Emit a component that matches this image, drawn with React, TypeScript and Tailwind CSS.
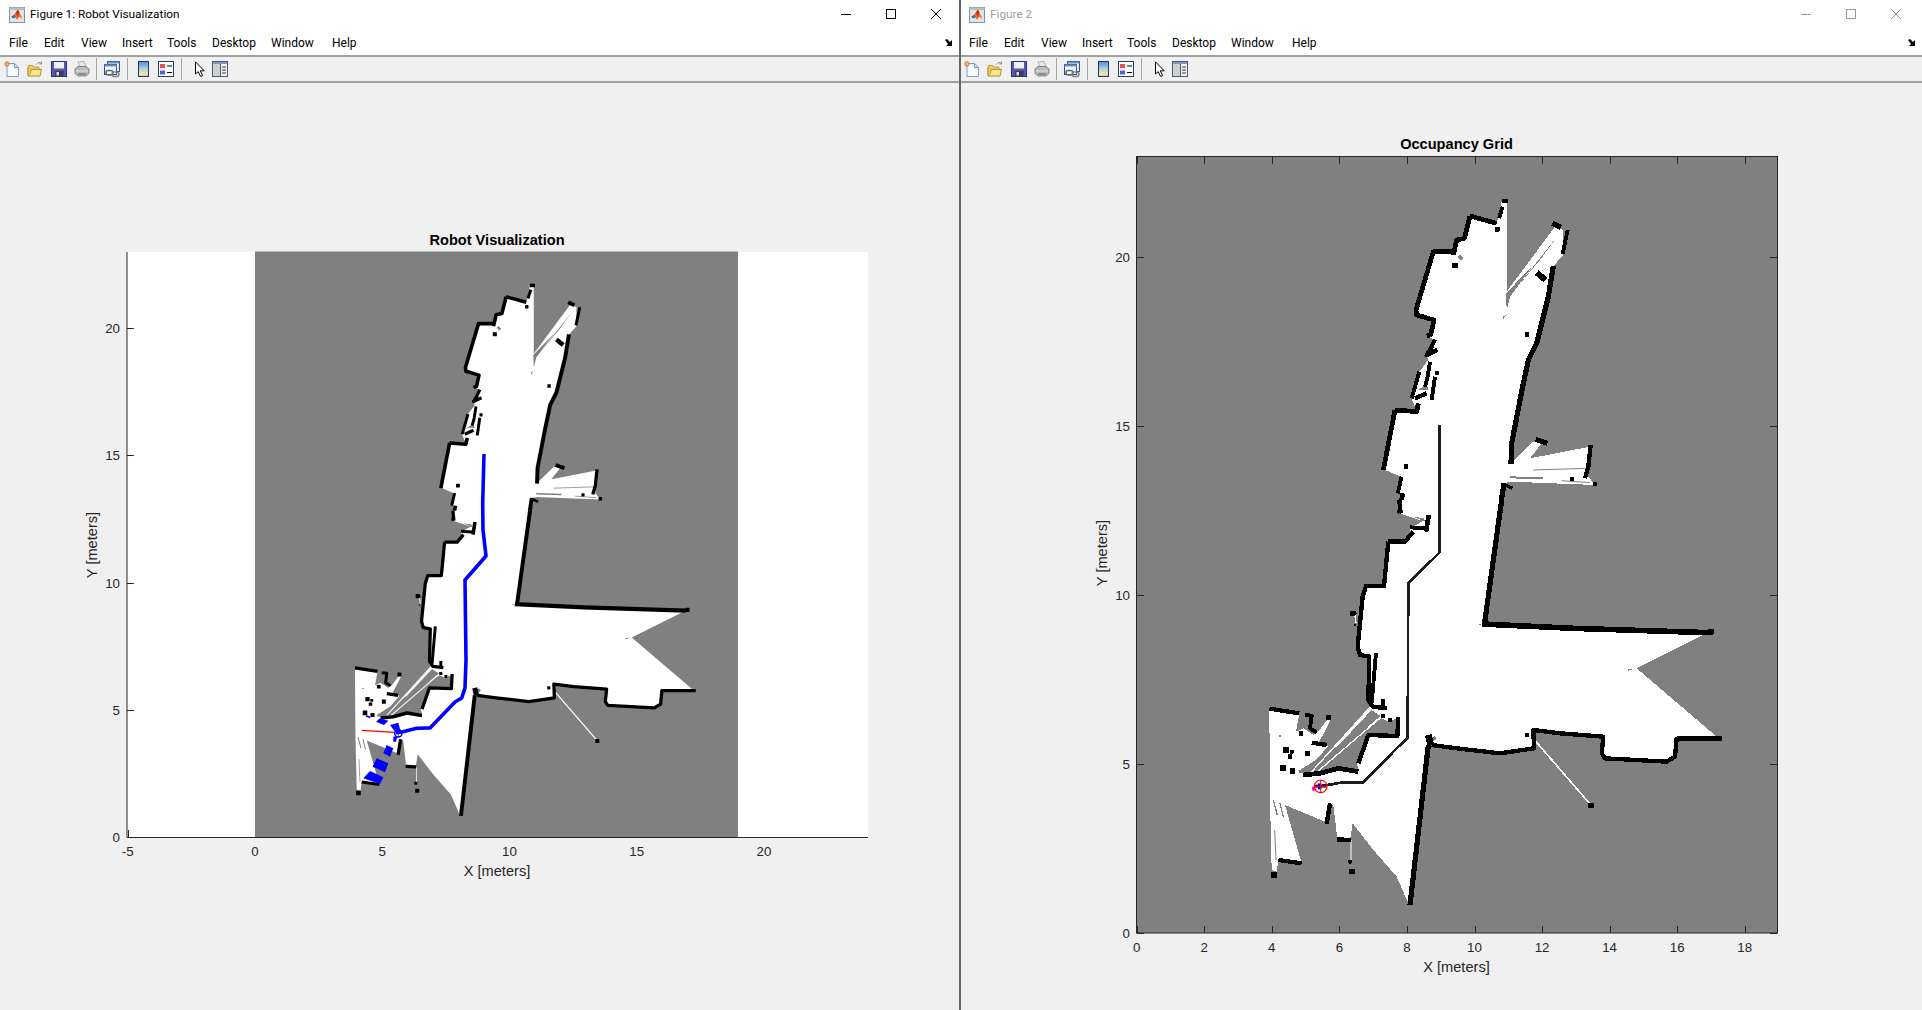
import React from "react";

type P = [string, number];
const G5 = "translate(1280 180) scale(0.33333)";
const G6 = "translate(1240 500) scale(0.33333)";

const OUT5 = "680,62 680,335 825,140 850,150 850,225 805,275 820,258 805,350 770,490 745,540 725,635 695,790 693,850 760,785 785,790 750,835 930,800 925,890 945,915 690,905 670,910 650,1020 420,1020 358,1000 368,940 352,940 362,890 315,870 345,690 410,695 395,655 418,575 445,540 440,525 450,510 462,478 445,470 460,420 410,405 405,390 460,215 520,220 530,180 555,175 570,108 650,130 665,65";
const OUT6 = "478,0 785,0 735,370 1410,395 1190,505 1430,710 1440,716 1310,716 1305,770 1280,785 1095,775 1085,760 1090,710 960,700 880,690 882,745 780,760 650,745 575,735 565,720 510,1215 505,1210 470,1130 400,1050 338,970 330,1020 292,1015 280,915 265,910 255,965 135,915 185,1090 115,1080 110,1115 95,1110 90,895 88,628 178,640 168,695 190,685 220,705 235,695 265,655 272,660 238,725 265,738 200,812 215,813 390,625 385,600 390,470 360,465 352,440 368,290 378,255 432,255 445,125 495,125 515,110 510,85 555,60 490,42 480,40";

const WALLS5: P[] = [
  ["665,63 685,63", 11], ["668,80 657,115", 9], ["570,108 650,130", 11],
  ["570,108 553,175 530,180 520,225", 11], ["520,215 460,215 408,390 410,405 462,420 452,465 440,468", 11],
  ["465,478 450,510 440,525 472,510", 10], ["450,545 443,590 435,620", 9], ["418,575 395,655", 9], ["405,655 440,640", 10],
  ["465,590 455,660", 9], ["345,690 410,695 415,670", 11], ["345,690 310,870", 11], ["365,890 353,940", 9], ["368,940 358,1000", 11],
  ["863,150 848,222", 9], ["817,130 842,142", 12], ["770,278 797,300", 14],
  ["820,258 805,350 770,490 745,540 725,635 695,790 693,852", 12], ["767,778 802,790", 12], ["932,795 925,860 915,895", 10],
  ["670,912 697,925", 8], ["672,910 655,1020", 12],
];
const DOTS5: number[][] = [[652, 148, 12], [525, 257, 14], [470, 578, 11], [378, 860, 13], [741, 463, 12], [876, 897, 11], [945, 912, 12], [444, 1012, 14]];
const GRAY5 = ["678,340 760,255 690,350 680,390", "670,408 678,405 668,422", "700,335 835,165 780,240", "415,630 440,612 445,630"];
const GRAYLINES5: P[] = [["760,870 920,865", 3], ["690,892 790,895", 6], ["845,902 930,908", 3], ["536,228 547,239", 10]];

const WALLS6: P[] = [
  ["478,0 482,40", 10], ["566,45 558,95", 11], ["510,82 555,85", 9], ["445,125 495,125 520,95", 10],
  ["445,125 432,258 378,258 368,290 353,440 360,465 388,470 385,600 398,620 440,625", 10], ["408,460 395,610", 9],
  ["475,650 472,708 385,705 355,790", 10], ["190,825 240,820 295,805 355,815", 11],
  ["88,626 178,640", 10], ["195,645 215,647 210,685 230,697", 9], ["215,728 260,735", 10],
  ["785,0 733,375", 12], ["725,372 1000,385 1405,398", 13],
  ["1445,716 1310,716 1305,770 1280,785 1095,775 1085,760 1090,710 960,700 880,690 882,745 780,760 650,745 575,735", 10],
  ["565,705 572,735", 16], ["565,735 510,1215", 12],
  ["270,910 260,972", 10], ["290,1018 332,1020", 10], ["115,1080 185,1090", 10], ["430,598 430,620", 9], ["340,335 345,345", 10],
];
const DOTS6: number[][] = [[1412, 395, 15], [860, 705, 11], [1053, 917, 14], [265, 652, 14], [183, 700, 13], [138, 750, 15], [155, 755, 10], [150, 770, 12], [203, 760, 14], [128, 805, 16], [158, 813, 14], [330, 1085, 10], [336, 1115, 14], [102, 1124, 16], [430, 648, 11], [450, 660, 10], [345, 375, 5], [338, 340, 14]];
const GRAY6 = ["175,813 425,655 445,665 470,655 470,705 385,705 350,790 355,808 295,800 240,812 180,820", "245,790 395,630 422,648 258,785", "520,50 552,55 555,65"];
const GRAYLINES6: P[] = [["720,372 720,376", 8], ["580,710 585,720", 10], ["1165,510 1175,508", 4], ["104,990 108,1080", 3], ["120,706 120,710", 6], ["120,910 130,950", 4], ["100,900 112,945", 4]];
const WHITELINES6: P[] = [["215,815 390,622", 4], ["232,815 425,650", 4], ["888,725 1050,912", 5], ["333,1020 333,1085", 3], ["345,345 348,370", 4]];

function Lines({ items, color, mult = 1 }: { items: P[]; color: string; mult?: number }) {
  return (
    <>
      {items.map(([p, w], i) => (
        <polyline key={i} points={p} fill="none" stroke={color} strokeWidth={w * mult} strokeLinejoin="round" />
      ))}
    </>
  );
}
function Dots({ items }: { items: number[][] }) {
  return (
    <>
      {items.map(([x, y, s0], i) => {
        const s = s0 * 1.15;
        return <rect key={i} x={x - s / 2} y={y - s / 2} width={s} height={s} rx={2} fill="#000" />;
      })}
    </>
  );
}

function MapShapes({ crisp, path }: { crisp: boolean; path: boolean }) {
  return (
    <g shapeRendering={crisp ? "crispEdges" : "auto"}>
      <rect x={1136.7} y={156} width={641} height={777} fill="#808080" />
      <g transform={G5}>
        <polygon points={OUT5} fill="#fff" />
        {GRAY5.map((p, i) => (
          <polygon key={i} points={p} fill="#808080" />
        ))}
        <Lines items={GRAYLINES5} color="#808080" />
        <Lines items={WALLS5} color="#000" mult={1.3} />
        <Dots items={DOTS5} />
        {path && <polyline points="478,735 478,1020" fill="none" stroke="#1c1c1c" strokeWidth={8} />}
      </g>
      <g transform={G6}>
        <polygon points={OUT6} fill="#fff" />
        {GRAY6.map((p, i) => (
          <polygon key={i} points={p} fill="#808080" />
        ))}
        <Lines items={GRAYLINES6} color="#808080" />
        <Lines items={WHITELINES6} color="#fff" />
        <Lines items={WALLS6} color="#000" mult={1.3} />
        <Dots items={DOTS6} />
        {path && (
          <polyline
            points="598,0 598,158 505,250 503,715 475,740 370,847 310,847 245,858"
            fill="none"
            stroke="#1c1c1c"
            strokeWidth={8}
          />
        )}
      </g>
    </g>
  );
}

const TEXT = "#262626";
const AXIS = "#262626";
const FF = "'Liberation Sans', Arial, sans-serif";

function Figure1() {
  const ys = [5, 10, 15, 20];
  const xs = [-5, 0, 5, 10, 15, 20];
  return (
    <svg viewBox="0 83 959 927" className="block w-[959px] h-[927px]" fontFamily={FF}>
      <rect x={127} y={252} width={741} height={585} fill="#fff" />
      <g transform="translate(255 837) scale(0.7535) translate(-1136.7 -933)">
        <MapShapes crisp={false} path={false} />
      </g>
      <polyline
        points="484,454 482.7,503 483,530 486,556 465,580 466,660 465,688 461.7,698 455,702 430,728 428,728 416.7,728.3 403,731.7 396,732.7"
        fill="none"
        stroke="#0000ff"
        strokeWidth={3.6}
        strokeLinejoin="round"
      />
      <g transform="translate(340 660) scale(0.33333)">
        <g fill="#0000ff">
          <polygon points="150,195 175,188 182,215 165,215" />
          <polygon points="160,230 172,228 168,245 160,245" />
          <polygon points="140,255 160,265 150,290 130,280" />
          <polygon points="110,295 145,310 135,337 98,320" />
          <polygon points="90,333 130,352 120,372 70,355" />
          <polygon points="120,175 145,182 132,195 108,185" />
          <polygon points="78,165 92,170 90,175 78,170" />
        </g>
        <line x1={65} y1={211} x2={165} y2={217} stroke="#ff0000" strokeWidth={4} />
        <circle cx={175} cy={220} r={11} fill="none" stroke="#0000ff" strokeWidth={4} />
        <line x1={175} y1={207} x2={175} y2={233} stroke="#0000ff" strokeWidth={2} />
        <line x1={163} y1={220} x2={187} y2={220} stroke="#0000ff" strokeWidth={2} />
      </g>
      <line x1={127} y1={252} x2={127} y2={837.5} stroke={AXIS} />
      <line x1={127} y1={837.5} x2={868} y2={837.5} stroke={AXIS} />
      {ys.map((v) => {
        const y = Math.round(837 - v * 25.45) + 0.5;
        return <line key={v} x1={127} y1={y} x2={134} y2={y} stroke={AXIS} />;
      })}
      <line x1={128.5} y1={830} x2={128.5} y2={837} stroke={AXIS} />
      {[0, ...ys].map((v) => (
        <text key={v} x={120} y={837 - v * 25.45 + 5} textAnchor="end" fontSize={13.3} fill={TEXT}>
          {v}
        </text>
      ))}
      {xs.map((v) => (
        <text key={v} x={255 + v * 25.45} y={856} textAnchor="middle" fontSize={13.3} fill={TEXT}>
          {v}
        </text>
      ))}
      <text x={497} y={245} textAnchor="middle" fontSize={14.6} fontWeight="bold" fill="#000">
        Robot Visualization
      </text>
      <text x={497} y={876} textAnchor="middle" fontSize={14.6} fill={TEXT}>
        X [meters]
      </text>
      <text transform="translate(97 545) rotate(-90)" textAnchor="middle" fontSize={14.6} fill={TEXT}>
        Y [meters]
      </text>
    </svg>
  );
}

function Figure2() {
  const x0 = 1136.7;
  const y0 = 933;
  const sx = 33.78;
  const sy = 33.8;
  const xs = [0, 2, 4, 6, 8, 10, 12, 14, 16, 18];
  const ys = [0, 5, 10, 15, 20];
  return (
    <svg viewBox="961 83 961 927" className="block w-[961px] h-[927px]" fontFamily={FF}>
      <MapShapes crisp={true} path={true} />
      <g transform="translate(1260 700) scale(0.33333)">
        <polygon points="155,262 163,258 167,270 158,274" fill="#ff00ff" />
        <rect x={165} y={254} width={32} height={9} fill="#10105a" />
        <rect x={174} y={250} width={10} height={18} fill="#0000e0" />
        <circle cx={182} cy={259} r={19} fill="none" stroke="#ff0000" strokeWidth={3.5} />
        <line x1={182} y1={240} x2={182} y2={278} stroke="#ff0000" strokeWidth={3} />
        <line x1={163} y1={259} x2={201} y2={259} stroke="#ff0000" strokeWidth={3} />
      </g>
      <rect x={1136.5} y={156.5} width={641} height={776.5} fill="none" stroke={AXIS} />
      {xs.map((v) => {
        const x = Math.round(x0 + v * sx) + 0.5;
        return (
          <g key={v} stroke={AXIS}>
            <line x1={x} y1={933} x2={x} y2={926} />
            <line x1={x} y1={157} x2={x} y2={164} />
          </g>
        );
      })}
      {ys.map((v) => {
        const y = Math.round(y0 - v * sy) + 0.5;
        return (
          <g key={v} stroke={AXIS}>
            <line x1={1137} y1={y} x2={1144} y2={y} />
            <line x1={1777} y1={y} x2={1770} y2={y} />
          </g>
        );
      })}
      {ys.map((v) => (
        <text key={v} x={1130} y={y0 - v * sy + 5} textAnchor="end" fontSize={13.3} fill={TEXT}>
          {v}
        </text>
      ))}
      {xs.map((v) => (
        <text key={v} x={x0 + v * sx} y={952} textAnchor="middle" fontSize={13.3} fill={TEXT}>
          {v}
        </text>
      ))}
      <text x={1456.5} y={149} textAnchor="middle" fontSize={14.6} fontWeight="bold" fill="#000">
        Occupancy Grid
      </text>
      <text x={1456.5} y={972} textAnchor="middle" fontSize={14.6} fill={TEXT}>
        X [meters]
      </text>
      <text transform="translate(1107 553) rotate(-90)" textAnchor="middle" fontSize={14.6} fill={TEXT}>
        Y [meters]
      </text>
    </svg>
  );
}

function Logo() {
  return (
    <svg width="16" height="16" viewBox="0 0 16 16" className="shrink-0">
      <rect x="0.5" y="0.5" width="15" height="15" fill="#dfe3ea" stroke="#8a8f99" />
      <rect x="0.5" y="0.5" width="15" height="2.5" fill="#b8bfcb" />
      <polygon points="2,10 5,8 7,5 9,2.5 10.5,6 13.5,12 10.5,9.5 8,12.5 6,10" fill="#e8641b" />
      <polygon points="2,10 5,8 6.5,10 5,11.5" fill="#2f6fb7" />
      <polygon points="9,2.5 10.5,6 8,9 7,5" fill="#c8321a" />
    </svg>
  );
}

function IconNew() {
  return (
    <svg width="16" height="16" viewBox="0 0 16 16" className="shrink-0">
      <path d="M3 2.5H10.5L14.5 6.5V15.5H3Z" fill="#f6faff" stroke="#7f9cc8" />
      <path d="M10.5 2.5V6.5H14.5Z" fill="#cfe0f5" stroke="#7f9cc8" />
      <circle cx="3" cy="3" r="2.2" fill="#f5b27a" stroke="#d2622a" strokeWidth="0.8" />
    </svg>
  );
}
function IconOpen() {
  return (
    <svg width="16" height="16" viewBox="0 0 16 16" className="shrink-0">
      <path d="M1 6.5V15H13L14.5 8.5H5Z" fill="#fbe39a" stroke="#b58f2f" />
      <path d="M1 6.5L1.5 4.5H5.5L6.5 6H12V8.5H4.5L3 13L1 15Z" fill="#f3c95c" stroke="#b58f2f" strokeWidth="0.8" />
      <path d="M9.5 3.5C10.5 1.3 13 1 14.5 2.5M14.5 0.8V3H12.5" fill="none" stroke="#7d8a99" />
    </svg>
  );
}
function IconSave() {
  return (
    <svg width="16" height="16" viewBox="0 0 16 16" className="shrink-0">
      <rect x="0.5" y="0.5" width="15" height="15" fill="#5557b5" stroke="#2f3185" />
      <rect x="3" y="1" width="10" height="6.5" fill="#eef0fa" />
      <rect x="4" y="10" width="8.5" height="5.5" fill="#3a3a50" />
      <rect x="5.5" y="11" width="2.5" height="3.5" fill="#d8dae8" />
    </svg>
  );
}
function IconPrint() {
  return (
    <svg width="16" height="16" viewBox="0 0 16 16" className="shrink-0">
      <path d="M4 1L10 0.5L12 6H6Z" fill="#e9ecef" stroke="#9aa0a6" strokeWidth="0.8" />
      <path d="M1 8L4 5.5H12L15 8V12.5L12 15H4L1 12.5Z" fill="#b9bcbf" stroke="#6e7175" strokeWidth="0.8" />
      <path d="M2 10H14" stroke="#e4e4e4" />
      <path d="M4 13H12" stroke="#5c5f63" />
    </svg>
  );
}
function IconLink() {
  return (
    <svg width="16" height="17" viewBox="0 0 16 17" className="shrink-0">
      <rect x="3.5" y="0.5" width="12" height="10" fill="#eef2f8" stroke="#2f4d8a" />
      <rect x="3.5" y="0.5" width="12" height="2" fill="#6f8fc0" />
      <rect x="0.5" y="3.5" width="12" height="10" fill="#f6f8fb" stroke="#2f4d8a" />
      <rect x="0.5" y="3.5" width="12" height="2" fill="#6f8fc0" />
      <rect x="2" y="9.5" width="7" height="4.5" rx="2.2" fill="none" stroke="#5f666e" strokeWidth="1.5" />
      <rect x="8" y="11" width="7" height="4.5" rx="2.2" fill="none" stroke="#7e858d" strokeWidth="1.5" />
    </svg>
  );
}
function IconColorbar({ id }: { id: string }) {
  return (
    <svg width="12" height="16" viewBox="0 0 12 16" className="shrink-0">
      <defs>
        <linearGradient id={id} x1="0" y1="0" x2="0" y2="1">
          <stop offset="0" stopColor="#6a7fd8" />
          <stop offset="0.5" stopColor="#a6d8d8" />
          <stop offset="0.8" stopColor="#f0e6a8" />
          <stop offset="1" stopColor="#f0c8a0" />
        </linearGradient>
      </defs>
      <rect x="0.5" y="0.5" width="10" height="15" fill={`url(#${id})`} stroke="#20346f" />
    </svg>
  );
}
function IconLegend() {
  return (
    <svg width="16" height="16" viewBox="0 0 16 16" className="shrink-0">
      <rect x="0.5" y="0.5" width="15" height="15" fill="#fff" stroke="#28406f" />
      <rect x="2" y="3" width="5" height="4" fill="#e8505a" />
      <rect x="2" y="9.5" width="5" height="4" fill="#5a5ad8" />
      <rect x="9" y="4.5" width="5" height="1" fill="#000" />
      <rect x="9" y="11" width="5" height="1" fill="#000" />
    </svg>
  );
}
function IconArrow() {
  return (
    <svg width="12" height="16" viewBox="0 0 12 16" className="shrink-0">
      <path d="M1.5 0.8V13L4.2 10.6L6.6 15.5L8.6 14.5L6.3 9.8H10.2Z" fill="#fff" stroke="#000" strokeLinejoin="round" />
    </svg>
  );
}
function IconPanel() {
  return (
    <svg width="16" height="16" viewBox="0 0 16 16" className="shrink-0">
      <rect x="0.5" y="0.5" width="15" height="15" fill="#f4f4f4" stroke="#4a5a70" />
      <rect x="1" y="1" width="14" height="2" fill="#7f97bb" />
      <rect x="1" y="3" width="7" height="12" fill="#d0d0d0" />
      <path d="M8.5 3V15" stroke="#4a5a70" />
      <path d="M10 6H14M10 9H14M10 12H14" stroke="#333" />
    </svg>
  );
}
function Sep() {
  return <div className="w-px h-[22px] bg-[#a8a8a8] shrink-0" />;
}

const MENU: [string, string][] = [
  ["File", "w-[35px]"],
  ["Edit", "w-[37px]"],
  ["View", "w-[41px]"],
  ["Insert", "w-[45px]"],
  ["Tools", "w-[45px]"],
  ["Desktop", "w-[59px]"],
  ["Window", "w-[61px]"],
  ["Help", "w-[40px]"],
];

function Chrome({ title, active, shift, children, cls }: { title: string; active: boolean; shift: boolean; children: React.ReactNode; cls: string }) {
  const icon = active ? "#000000" : "#9a9a9a";
  return (
    <div className={`h-[1010px] bg-[#f0f0f0] flex flex-col shrink-0 ${cls}`}>
      <div className={`h-[30px] bg-white flex items-center ${shift ? "pl-[8px]" : "pl-[9px]"}`}>
        <Logo />
        <span className={`ml-[5px] text-[11.8px] font-['Roboto'] ${active ? "text-black" : "text-[#a0a0a0]"}`}>{title}</span>
        <div className={`ml-auto flex items-center pb-[2px] gap-[35px] ${shift ? "pr-[21px]" : "pr-[18px]"}`}>
          <svg width="10" height="10" viewBox="0 0 10 10"><path d="M0 5.5H10" stroke={icon} /></svg>
          <svg width="10" height="10" viewBox="0 0 10 10"><rect x="0.5" y="0.5" width="9" height="9" fill="none" stroke={icon} /></svg>
          <svg width="10" height="10" viewBox="0 0 10 10"><path d="M0 0L10 10M10 0L0 10" stroke={icon} /></svg>
        </div>
      </div>
      <div className={`h-[25px] bg-white flex items-center ${shift ? "pl-[8px]" : "pl-[9px]"} text-[12px] text-black font-['Roboto'] border-b-2 border-[#a0a0a0] box-content`}>
        {MENU.map(([m, w]) => (
          <span key={m} className={`${w} shrink-0`}>{m}</span>
        ))}
        <svg width="8" height="8" viewBox="0 0 8 8" className="ml-auto mr-[6px]">
          <path d="M0 1L2 0L5 3L7 1V7H1L3 5Z" fill="#000" />
        </svg>
      </div>
      <div className={`h-[24px] flex items-center ${shift ? "pl-[3px]" : "pl-[4px]"} border-b-2 border-[#a0a0a0] box-content`}>
        <IconNew />
        <div className="w-[7px] shrink-0" />
        <IconOpen />
        <div className="w-[8px] shrink-0" />
        <IconSave />
        <div className="w-[7px] shrink-0" />
        <IconPrint />
        <div className="w-[6px] shrink-0" />
        <Sep />
        <div className="w-[7px] shrink-0" />
        <IconLink />
        <div className="w-[7px] shrink-0" />
        <Sep />
        <div className="w-[10px] shrink-0" />
        <IconColorbar id={shift ? "cb2" : "cb1"} />
        <div className="w-[8px] shrink-0" />
        <IconLegend />
        <div className="w-[7px] shrink-0" />
        <Sep />
        <div className="w-[12px] shrink-0" />
        <IconArrow />
        <div className="w-[6px] shrink-0" />
        <IconPanel />
      </div>
      {children}
    </div>
  );
}

export default function App() {
  return (
    <div className="w-[1922px] h-[1010px] overflow-hidden flex bg-[#f0f0f0]">
      <Chrome title="Figure 1: Robot Visualization" active={true} shift={false} cls="w-[960px] border-r border-[#666666]">
        <Figure1 />
      </Chrome>
      <Chrome title="Figure 2" active={false} shift={true} cls="w-[962px] border-l border-[#666666]">
        <Figure2 />
      </Chrome>
    </div>
  );
}
